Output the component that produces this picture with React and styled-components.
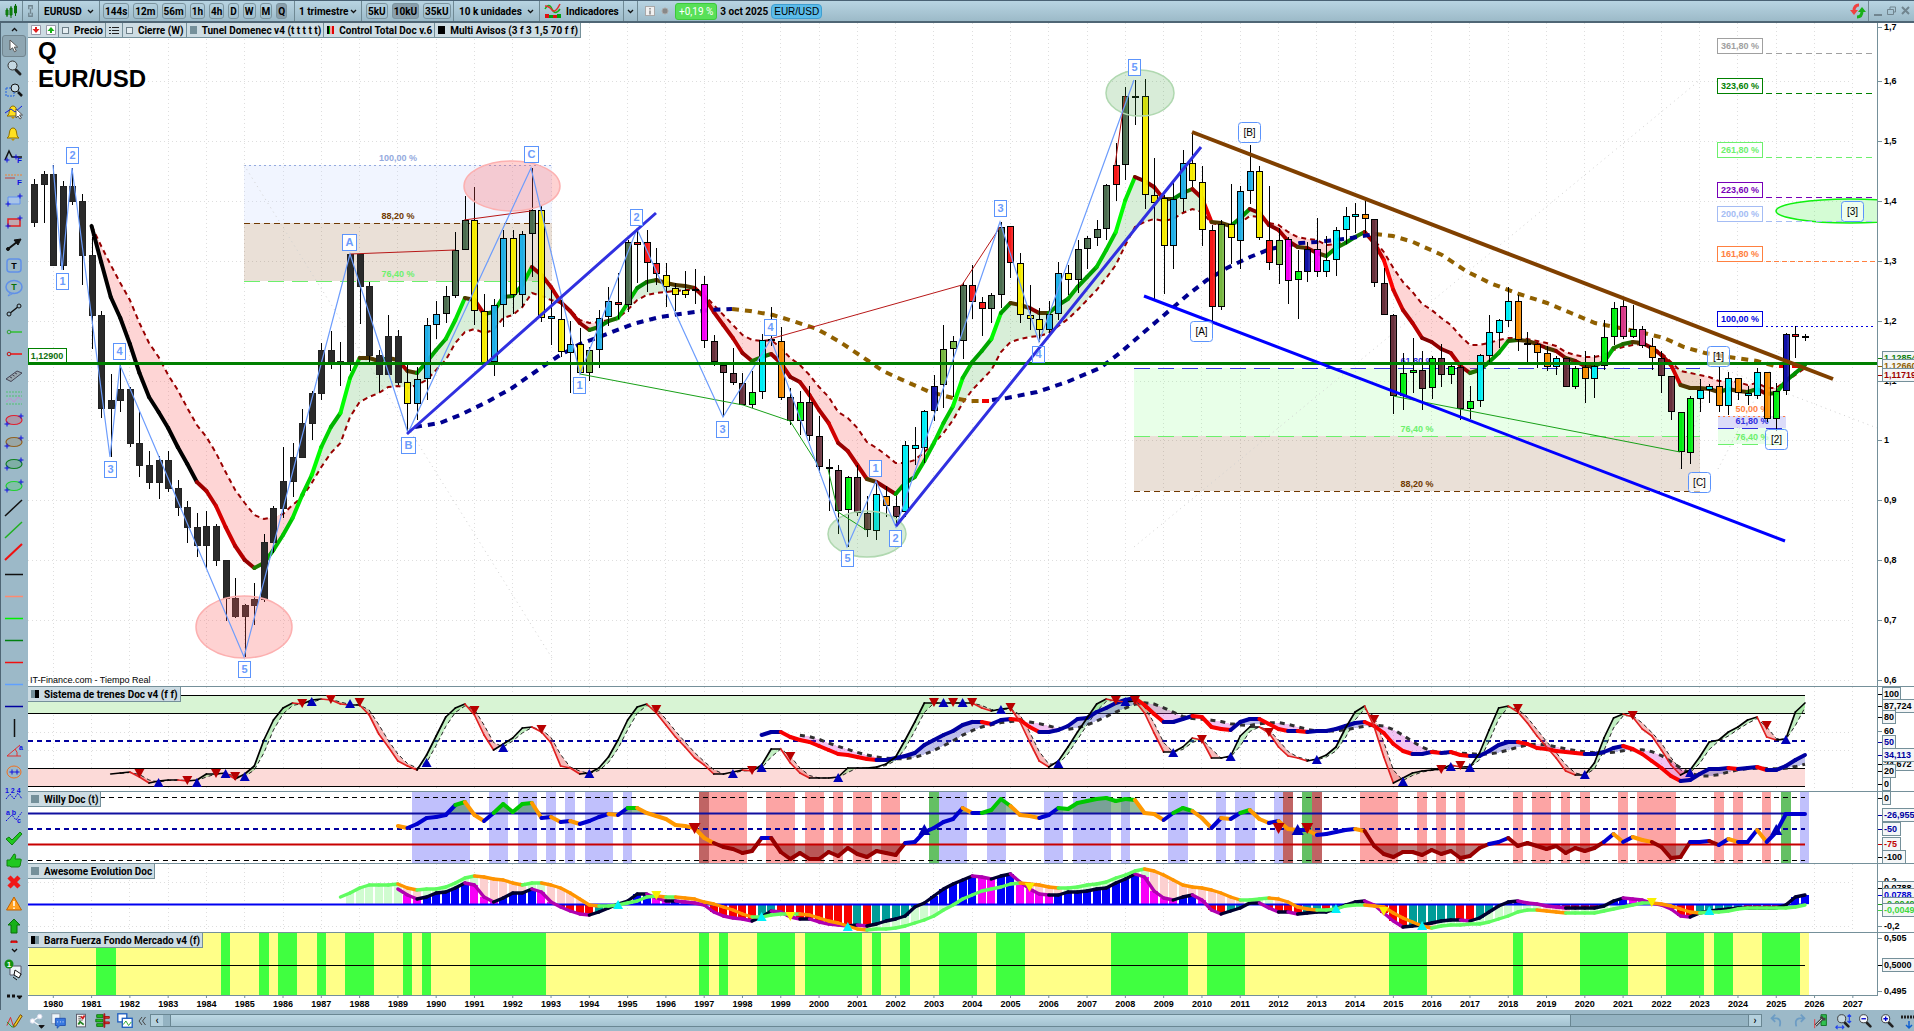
import React from 'react';
import styled, { createGlobalStyle, css } from 'styled-components';

const GlobalStyle = createGlobalStyle`
  *, *::before, *::after { box-sizing: border-box; }
  body {
    margin: 0;
    background: #fff;
    color: #000;
    font-family: 'Liberation Sans', Arial, sans-serif;
    font-size: 9px;
  }
`;

/* ---------- data ---------- */

const LEFT = 28;
const x = (q) => 53.3 + 9.572 * q;
const years = Array.from({ length: 48 }, (_, i) => 1980 + i);
const series = (start, text) => text.trim().split(/\s+/).map((v, i) => ({ q: start + i, y: Number(v) }));

const candleFill = {
  k: '#222', y: '#f8ee00', s: '#20b0e8', g: '#4c6e50', o: '#78b840', r: '#f81818', m: '#f800f8',
  b: '#68303c', l: '#00f010', c: '#00f0f8', a: '#f88c00', n: '#1010a8', p: '#d83888', d: '#000',
};

// high, open/close top, open/close bottom, low, colour - one entry per quarter
const candles = `
179,184,223,227,k 171,174,185,223,k 165,174,266,266,k 181,186,266,270,k 168,186,202,205,k 194,201,256,285,k
237,255,316,349,k 311,315,409,418,k 374,400,409,457,k 365,389,401,412,k 387,389,444,447,k 411,443,466,477,k
451,465,483,489,k 456,460,483,499,k 451,460,489,492,k 480,488,508,516,k 501,507,528,543,k 513,527,546,557,k
511,526,546,568,k 524,526,561,566,k 560,560,599,621,k 578,598,617,618,k 604,605,617,657,k 583,599,606,625,k
534,542,600,602,k 506,508,543,553,k 447,481,509,518,k 443,457,482,497,k 409,423,458,458,k 391,393,424,440,k
343,350,394,400,k 331,350,363,369,k 342,361,363,386,k 254,254,364,371,k 254,254,287,324,k 282,286,356,362,k
350,355,375,392,k 315,336,375,375,k 330,336,383,385,k 365,382,404,433,y 367,379,404,420,s 318,325,379,400,s
301,314,325,339,s 286,296,314,323,g 232,250,296,298,g 196,220,250,250,g 187,220,311,325,y 294,311,363,363,y
299,305,362,376,s 230,238,305,327,s 230,238,295,314,y 231,234,295,307,s 168,210,234,277,g 206,210,318,322,y
290,316,319,345,s 300,319,352,357,y 321,344,353,393,s 328,344,373,374,y 347,350,373,381,o 310,318,350,368,s
287,301,317,326,s 273,302,305,319,r 240,242,305,312,g 229,242,245,283,r 230,242,263,292,r 248,263,274,285,r
263,275,287,307,y 283,288,295,311,y 271,290,295,298,y 269,289,291,304,d 276,284,341,348,m 335,341,362,366,b
365,365,373,417,b 348,373,383,385,b 373,383,405,405,b 371,392,405,408,l 334,340,392,399,c 307,339,341,346,d
327,341,398,400,a 388,397,421,425,b 391,402,421,435,l 386,402,436,441,b 416,436,467,473,b 459,467,469,511,d
465,470,511,534,b 476,477,510,547,l 465,477,513,516,b 496,513,530,537,b 482,494,531,540,c 486,496,506,517,a
496,506,517,527,b 441,445,512,517,c 427,445,449,465,c 410,411,448,463,c 375,386,411,421,n 325,349,385,408,o
336,341,349,397,o 282,285,341,359,g 265,285,302,319,r 297,302,309,336,r 293,295,309,323,g 222,227,295,308,g
226,226,263,278,r 253,263,315,323,y 285,315,319,330,y 308,319,330,342,y 301,314,330,334,s 262,273,314,320,s
265,273,280,295,y 240,249,280,293,g 236,238,249,269,g 220,229,238,246,g 184,185,229,240,g 143,165,185,201,r
87,96,165,180,g 80,96,97,125,d 79,96,195,209,y 158,195,203,301,y 195,198,246,294,y 181,199,246,269,s
150,163,199,212,s 132,163,181,187,y 166,182,230,246,y 225,230,307,329,r 220,224,307,310,o 184,224,238,264,y
186,191,241,269,s 145,171,191,204,s 166,171,238,240,y 186,240,263,270,r 228,240,265,284,o 237,239,281,304,m
250,271,280,319,l 242,249,272,282,n 218,249,272,277,m 236,260,272,277,c 227,230,260,276,c 207,216,230,244,c
203,214,217,233,c 201,214,219,233,a 219,219,283,287,b 268,283,315,315,b 314,315,396,414,b 353,373,396,410,l
338,370,373,393,l 351,370,389,410,b 356,358,388,399,l 344,358,375,387,b 364,366,375,384,l 365,367,409,420,b
386,401,409,419,l 354,355,401,407,c 315,332,356,362,c 319,320,333,348,c 287,301,321,327,c 295,301,340,351,a
332,343,345,362,d 343,344,353,368,a 346,353,367,371,a 356,358,367,375,c 358,358,387,387,b 366,368,387,389,l
351,367,379,403,a 355,366,379,398,c 320,337,366,370,l 302,308,337,345,l 299,306,337,339,p 305,329,337,338,l
326,329,346,348,p 338,346,358,370,a 351,358,376,393,b 376,376,412,420,b 412,412,452,469,l 396,398,453,464,l
379,390,399,412,c 384,386,390,403,c 366,386,406,412,a 372,378,406,415,c 378,378,393,400,a 386,393,396,405,c
368,372,396,399,c 372,372,419,422,a 383,391,419,431,l 333,334,391,395,n 326,334,337,358,r 334,336,338,341,d
`.trim().split(/\s+/).map((row, i) => {
  const [high, top, bottom, low, color] = row.split(',');
  return { q: i - 2, high: +high, top: +top, bottom: +bottom, low: +low, color };
});

const tunnelFast = series(4, `226 262 297 318 344 373 397 412 428 447 464 482 491 506 527 546 560 568 563 550
535 518 495 475 447 427 413 378 358 358 361 358 360 371 373 362 350 339 320 298 300 314 312 297 296 285 267 275
287 302 311 323 330 327 321 318 303 288 282 280 283 285 286 288 297 312 325 338 353 361 357 354 363 377 382 395
410 423 443 451 465 479 482 488 494 483 477 461 443 423 406 378 362 351 339 313 303 305 308 313 313 305 299 287
277 267 250 232 200 177 181 187 199 199 193 189 198 222 223 226 218 209 213 225 230 241 247 248 253 256 248 243
237 232 243 260 290 310 323 338 342 349 353 366 373 370 362 353 341 340 341 344 348 351 358 361 366 366 362 348
344 342 343 348 355 365 385 388 388 389 392 389 391 392 389 394 393 381 373 365`);

const tunnelSlow = series(4, `226 246 265 283 300 323 343 357 375 390 408 425 437 453 472 490 503 515 519 517
514 505 497 483 467 453 443 417 402 397 393 387 386 388 385 380 370 360 343 332 329 333 330 318 315 307 293 296
300 303 310 320 323 322 320 318 310 300 295 293 292 291 290 290 295 305 315 325 335 340 341 340 348 358 365 375
387 397 412 418 428 442 448 455 463 463 460 452 443 433 420 403 390 380 370 352 342 339 337 336 333 326 319 310
300 290 278 265 245 227 222 219 221 219 213 209 212 223 225 227 223 216 217 223 225 232 237 239 240 245 244 242
237 233 240 252 268 282 292 304 310 318 325 336 345 345 343 340 338 338 339 341 343 346 352 355 357 357 355 350
347 345 344 347 353 362 371 373 375 377 381 381 382 385 383 388 388 381 375 368`);

const longAverage = [
  { color: '#000090', points: '415,427 440,423 460,415 487,402 512,388 535,372 557,357 580,344 607,334 633,324 660,317 687,313 710,310 732,309' },
  { color: '#906000', points: '732,309 750,311 773,315 793,321 817,329 840,342 867,360 883,371 907,382 930,392 953,398 970,401 982,401' },
  { color: '#f00000', points: '982,401 992,401' },
  { color: '#000090', points: '992,400 1007,398 1037,392 1067,382 1100,368 1120,353 1143,333 1170,310 1190,293 1207,280 1227,268 1250,257 1270,249 1300,243 1316,242 1345,239 1375,234' },
  { color: '#906000', points: '1375,234 1393,236 1413,242 1442,255 1466,271 1490,283 1519,294 1547,303 1571,313 1595,323 1620,328 1644,333 1664,338 1684,347 1705,353 1729,357 1757,361 1775,366' },
  { color: '#f00000', points: '1779,366 1802,366' },
];

const wavePath = '53,165 62,270 72,168 110,457 120,365 244,657 350,254 408,433 531,168 580,374 637,229 723,417 771,339 847,547 876,481 896,527 1000,222 1039,342 1134,80';
const waveLabels = [
  ['2', 72, 155], ['1', 62, 281], ['4', 119, 351], ['3', 110, 469], ['5', 244, 669], ['A', 349, 242], ['B', 408, 445],
  ['C', 531, 154], ['2', 636, 217], ['1', 579, 385], ['3', 722, 429], ['4', 770, 327], ['5', 847, 558], ['1', 875, 468],
  ['2', 895, 538], ['3', 1000, 208], ['4', 1038, 354], ['5', 1134, 67],
];
const bigWaveLabels = [
  ['[A]', 1201, 331], ['[B]', 1249, 132], ['[C]', 1699, 482], ['[1]', 1718, 356], ['[2]', 1776, 439], ['[3]', 1852, 211],
];
const extensions = [
  ['361,80 %', 38, '#a0a0a0', '6 4'], ['323,60 %', 78, '#008000', '6 4'], ['261,80 %', 142, '#6cf06c', '6 4'],
  ['223,60 %', 182, '#7800b8', '6 4'], ['200,00 %', 206, '#a4bcf4', '6 4'], ['161,80 %', 246, '#ff8040', '5 3'],
  ['100,00 %', 311, '#0000e0', '2 3'],
];

const oscillator = series(6, `774 773 772 777 783 781 780 780 781 780 774 774 773 779 774 766 740 720 708 703 704 700
699 700 704 705 705 715 734 747 761 766 770 755 736 717 708 704 715 735 750 744 738 728 727 732 743 766 768 774 773
768 757 740 720 707 704 713 725 737 747 758 765 774 774 772 770 771 765 749 749 763 773 778 778 778 777 768 768 768
767 764 757 740 722 703 703 703 703 703 703 708 711 709 708 722 742 761 767 761 747 732 718 704 699 701 702 701 713
733 752 752 747 738 740 758 758 756 736 727 727 733 747 756 758 761 759 755 747 728 712 706 727 757 783 778 773 771
770 769 765 767 767 753 730 708 706 712 723 736 747 758 771 775 775 763 738 718 714 717 729 736 750 765 775 770 757
742 740 732 727 720 717 737 740 739 712 703`);
const trainTrend = series(74, `735 732 732 737 740 742 746 750 754 755 757 759 760 760 758 756 753 745 740 735 731
725 722 722 724 720 719 720 727 732 732 730 726 719 718 712 708 703 700 698 705 714 722 722 719 716 717 727 729 730
722 719 719 724 729 731 731 732 731 731 729 726 723 722 726 733 744 751 754 754 752 753 752 755 756 756 751 745 742
742 744 748 749 751 752 753 754 754 752 748 746 749 754 761 768 776 781 780 774 769 769 768 769 768 767 770 770 766
760 755`);
const trainSells = [[9, 774], [14, 781], [17, 774], [19, 777], [26, 704], [29, 700], [32, 703], [44, 711], [51, 730],
  [63, 710], [73, 771], [77, 757], [92, 703], [94, 703], [96, 703], [100, 708], [111, 701], [113, 701], [120, 740],
  [127, 733], [138, 720], [145, 770], [147, 766], [153, 709], [165, 716], [179, 726]];
const trainBuys = [[11, 783], [15, 783], [18, 774], [20, 777], [27, 702], [31, 704], [39, 763], [47, 748], [56, 774],
  [71, 774], [74, 768], [82, 778], [93, 703], [95, 703], [99, 710], [105, 764], [112, 702], [117, 753], [123, 757],
  [132, 760], [141, 782], [146, 767], [148, 768], [160, 775], [171, 773], [181, 740]];

const willy = series(36, `826 828 824 818 817 815 805 802 815 821 813 804 812 804 803 818 817 822 821 824 821 817 814
815 808 808 813 816 819 825 826 828 838 843 847 849 853 851 838 838 852 859 853 859 859 852 856 848 854 857 851 853
855 843 842 832 828 822 819 808 813 813 810 799 806 815 816 818 815 808 809 803 801 799 798 801 799 800 813 814 820
813 808 811 818 828 818 819 813 810 819 823 821 829 830 830 835 834 832 830 829 831 846 854 857 852 852 855 850 854
851 858 856 848 844 842 838 846 843 846 849 846 853 848 851 848 842 834 842 837 840 842 847 858 857 842 842 841 845
839 842 842 830 842 832 814 814 814`);
const willyBands = [
  ['#c0c0fc', '37.5-43.5 45.5-47.5 48.5-50.5 51.5-52.5 53.5-54.5 55.5-58.5 59.5-60.5 92.5-95.5 97.5-99.5 103.5-105.5 106.5-110.5 111.5-112.5 116.5-118.5 121.5-122.5 123.5-125.5 127.5-128.5 182.5-183.4'],
  ['#fca4a4', '68.5-72.5 74.5-77.5 78.5-80.5 81.5-82.5 83.5-85.5 86.5-88.5 136.5-140.5 142.5-143.5 144.5-145.5 146.5-147.5 152.5-153.5 154.5-156.5 157.5-158.5 159.5-160.5 163.5-164.5 165.5-169.5 173.5-174.5 175.5-176.5 178.5-179.5'],
  ['#c06464', '67.5-68.5 128.5-129.5 131.5-132.5'],
  ['#64c064', '91.5-92.5 130.5-131.5 180.5-181.5'],
];

const awesomeFast = series(36, `889 895 899 897 893 892 888 883 885 897 902 898 893 893 889 892 902 907 911 914 915
912 908 904 901 894 894 898 901 901 902 903 905 912 916 918 919 921 917 911 912 917 919 919 922 924 925 926 925 926
924 921 919 916 907 903 896 889 884 880 876 877 879 876 874 882 889 894 895 895 892 892 891 889 888 883 879 874 877
891 898 900 897 895 900 910 914 911 908 903 903 908 912 912 914 913 912 912 909 905 902 901 905 913 921 927 926 925
923 921 920 920 921 918 912 906 902 901 903 904 906 907 908 908 908 908 906 901 898 899 900 903 905 909 916 917 913
911 910 909 908 908 908 908 908 905 897 895`);
const awesomeSlow = series(30, `897 893 888 885 885 885 884 888 890 889 889 887 883 878 876 877 879 880 883 885 883
883 885 888 893 899 905 906 906 905 903 901 897 896 897 897 898 899 902 904 907 910 914 917 917 915 914 914 914 915
918 921 923 926 929 930 929 929 928 926 923 920 916 910 905 899 895 891 889 887 884 883 884 885 887 888 888 887 885
884 882 878 875 871 869 871 875 880 885 887 888 890 893 897 900 900 899 898 899 902 907 909 910 910 909 906 905 905
906 907 913 918 922 926 928 926 925 925 924 924 922 919 916 912 910 910 911 912 913 913 913 913 911 909 907 905 903
903 904 906 909 912 913 912 912 911 909 908 908 908 908 908 907 905`);

const forceBands = [['#40ff40', '4.5-6.5 17.5-18.5 21.5-22.5 23.5-25.5 27.5-28.5 30.5-33.5 36.5-37.5 38.5-39.5 43.5-51.5 67.5-68.5 69.5-70.5 73.5-77.5 78.5-84.5 85.5-86.5 88.5-89.5 92.5-96.5 98.5-101.5 110.5-118.5 120.5-124.5 139.5-143.5 152.5-153.5 159.5-164.5 168.5-172.5 173.5-175.5 178.5-182.5']];

/* ---------- layout ---------- */

const Shell = styled.div`
  display: flex;
  flex-direction: column;
  height: 100vh;
  overflow: hidden;
  background: #9cb9c6;
`;

const TopBar = styled.header`
  display: flex;
  align-items: stretch;
  height: 23px;
  flex: none;
  border-top: 1px solid #4a6274;
  border-bottom: 2px solid #4f6675;
  background: linear-gradient(#b8d4e2, #9cbac8);
  font: bold 10px Roboto, sans-serif;
`;

const Group = styled.div`
  display: flex;
  align-items: center;
  gap: ${(props) => props.$gap || 4}px;
  padding: 0 ${(props) => (props.$pad === undefined ? 4 : props.$pad)}px;
  width: ${(props) => (props.$w ? `${props.$w}px` : 'auto')};
  border-right: ${(props) => (props.$open ? 'none' : '1px solid #6f8994')};
  white-space: nowrap;
`;

const Spacer = styled.div`
  flex: 1;
`;

const plainButton = css`
  display: flex;
  align-items: center;
  justify-content: center;
  padding: 0;
  border: 0;
  background: none;
  color: inherit;
  font: inherit;
`;

const BarButton = styled.button`
  ${plainButton}
  gap: 5px;
`;

const ScaleButton = styled.button`
  ${plainButton}
  height: 16px;
  padding: 0 1px;
  border: 1px solid #7b949f;
  border-radius: 3px;
  background: ${(props) => (props.$on ? '#8a9fac' : 'transparent')};
`;

const Picker = styled.button`
  ${plainButton}
  flex: 1;
  justify-content: space-between;
`;

const Change = styled.span`
  padding: 2px 3px;
  border: 1px solid #3cc83c;
  border-radius: 3px;
  background: #58e058;
  color: #fff;
  font: 10px Roboto, sans-serif;
`;

const Pair = styled.span`
  padding: 1px 2px;
  border: 1px solid #3f9ed0;
  border-radius: 4px;
  background: #5cbcea;
  font: 10px 'Liberation Sans', sans-serif;
`;

const Body = styled.div`
  display: flex;
  flex: 1;
  min-height: 0;
`;

const Rail = styled.nav`
  display: flex;
  flex-direction: column;
  width: 28px;
  flex: none;
  padding: 0 2px 0 1px;
  border-left: 1px solid #4f6675;
  background: #9cb9c8;
`;

const RailTools = styled.div`
  display: flex;
  flex-direction: column;
  flex: 1;
  min-height: 0;
  overflow: hidden;
`;

const RailButton = styled.button`
  ${plainButton}
  height: ${(props) => props.$h || 22}px;
  flex: none;
  border: 1px solid ${(props) => (props.$on ? '#71858f' : 'transparent')};
  border-radius: 3px;
  background: ${(props) => (props.$on ? '#8ea6b2' : 'none')};
`;

const Charts = styled.main`
  display: flex;
  flex-direction: column;
  flex: 1;
  min-width: 0;
  background: #fff;
`;

const Panel = styled.section`
  position: relative;
  display: grid;
  grid-template-columns: minmax(0, 1fr) 37px;
  height: ${(props) => (props.$h ? `${props.$h}px` : 'auto')};
  flex: ${(props) => (props.$h ? 'none' : 1)};
  min-height: 0;
  border-top: ${(props) => (props.$h ? '1px solid #75909a' : 'none')};
`;

const Plot = styled.svg`
  display: block;
  width: 100%;
  height: 100%;
  overflow: hidden;
`;

const Axis = styled.svg`
  display: block;
  width: 37px;
  height: 100%;
  border-left: 1px solid #75909a;
  overflow: hidden;
`;

const Tabs = styled.div`
  position: absolute;
  top: 0;
  left: 0;
  display: flex;
  height: 15px;
  border: 1px solid #75909a;
  border-top: 0;
  border-left: 0;
  background: #cddce3;
  font: bold 10px Roboto, sans-serif;
`;

const Tab = styled.div`
  display: flex;
  align-items: center;
  gap: 5px;
  padding: 0 2px 0 3px;
  white-space: nowrap;
  & + & { border-left: 1px solid #75909a; }
`;

const Check = styled.input`
  appearance: none;
  width: 7px;
  height: 7px;
  margin: 0;
  border: 1px solid #6d7f88;
  background: #e4edf1;
`;

const Swatch = styled.i`
  width: 7px;
  height: 8px;
  background: ${(props) => props.$fill};
`;

const Title = styled.h1`
  position: absolute;
  top: 14px;
  left: 10px;
  margin: 0;
  font: bold 24px/28px 'Liberation Sans', Arial, sans-serif;
`;

const Source = styled.p`
  position: absolute;
  bottom: 1px;
  left: 2px;
  margin: 0;
  font-size: 9px;
  line-height: 10px;
`;

const TimeAxis = styled(Plot)`
  height: 15px;
  flex: none;
`;

const Caption = styled.text`
  font: bold ${(props) => props.$size || 9}px 'Liberation Sans', Arial, sans-serif;
  fill: ${(props) => props.$fill || '#000'};
  text-anchor: ${(props) => props.$anchor || 'middle'};
`;

const WaveText = styled(Caption)`
  font-weight: ${(props) => (props.$plain ? 'normal' : 'bold')};
`;

const BottomBar = styled.footer`
  display: flex;
  align-items: center;
  gap: 4px;
  height: 21px;
  flex: none;
  padding: 0 0 0 6px;
  overflow: hidden;
  background: #9cb9c8;
`;

const FootButton = styled.button`
  ${plainButton}
  width: 18px;
  height: 18px;
  flex: none;
`;

const CutButton = styled(FootButton)`
  width: 14px;
  justify-content: flex-start;
  overflow: hidden;
`;

const ScrollTrack = styled.div`
  display: flex;
  flex: 1;
  height: 13px;
  margin: 0 2px 0 0;
  border: 1px solid #6a8793;
  background: #94b3c2;
`;

const ScrollStep = styled.button`
  ${plainButton}
  width: 12px;
  background: #b4d0dd;
  font: bold 10px Roboto, sans-serif;
`;

const ScrollThumb = styled.div`
  width: 87%;
  margin-left: 7px;
  border: 1px solid #6a8793;
  border-width: 0 1px;
  background: linear-gradient(#bcd8e4, #a4c2d0);
`;

const ScrollFree = styled.div`
  flex: 1;
  border-right: 1px solid #6a8793;
`;

/* ---------- chart pieces ---------- */

const Stage = ({ top, children }) => <g transform={`translate(${-LEFT} ${-top})`}>{children}</g>;

const Grid = ({ rows, top, bottom }) => (
  <g stroke="#dedede" strokeDasharray="1 3" shapeRendering="crispEdges">
    {years.map((year, i) => <line key={year} x1={x(i * 4)} x2={x(i * 4)} y1={top} y2={bottom} />)}
    {rows.map((y) => <line key={y} x1={LEFT} x2="100%" y1={y} y2={y} />)}
  </g>
);

const Segments = ({ data, color, width }) => (
  <g strokeWidth={width} strokeLinecap="round">
    {data.slice(1).map((p, i) => (
      <line key={p.q} x1={x(p.q - 1)} y1={data[i].y} x2={x(p.q)} y2={p.y} stroke={color(data[i].y, p.y, p.q)} />
    ))}
  </g>
);

const Between = ({ a, b, up, down }) => (
  <g shapeRendering="crispEdges">
    {a.slice(1).map((p, i) => {
      const p0 = a[i];
      const points = `${x(p0.q)},${p0.y} ${x(p.q)},${p.y} ${x(p.q)},${b[i + 1].y} ${x(p0.q)},${b[i].y}`;
      return <polygon key={p.q} points={points} fill={p.y + p0.y < b[i].y + b[i + 1].y ? up : down} />;
    })}
  </g>
);

const toPoints = (data) => data.map((p) => `${x(p.q)},${p.y}`).join(' ');

const average = (data, length) => data.slice(length - 1).map((p, i) => ({
  q: p.q,
  y: data.slice(i, i + length).reduce((sum, d) => sum + d.y, 0) / length,
}));

const Marker = ({ q, y, up, fill, size = 5 }) => (
  <path fill={fill} d={up ? `M${x(q)} ${y - size}l${size} ${size * 2 - 1}h${-2 * size}z` : `M${x(q)} ${y + size - 1}l${size} ${1 - size * 2}h${-2 * size}z`} />
);

const Bands = ({ bands, top, height }) => (
  <g shapeRendering="crispEdges">
    {bands.map(([fill, text]) => text.split(' ').map((band) => {
      const [from, to] = band.split('-').map(Number);
      return <rect key={band} x={x(from)} width={x(to) - x(from)} y={top} height={height} fill={fill} />;
    }))}
  </g>
);

const tunnelColor = (from, to, q) => {
  const d = Math.abs(to - from);
  if (q < 16) return '#000';
  if (to < from) return `rgb(${d < 6 ? 30 : 0}, ${Math.min(255, 95 + d * 6)}, 0)`;
  return d < 4 ? '#503800' : `rgb(${Math.min(255, 110 + d * 5)}, 0, 0)`;
};

const Fib = ({ left, right, labelX, levels }) => levels.map(([label, y, color, dash, fill, fillTo]) => (
  <g key={label}>
    {fill && <rect x={left} width={right - left} y={y} height={fillTo - y} fill={fill} />}
    <line x1={left} x2={right} y1={y} y2={y} stroke={color} strokeDasharray={dash} shapeRendering="crispEdges" />
    <Caption x={labelX} y={y - 4} $fill={color}>{label}</Caption>
  </g>
));

const AxisLabels = ({ top, labels }) => (
  <g transform={`translate(0 ${-top})`}>
    {labels.map(([label, y, color, boxed]) => (
      <g key={`${label}${y}`}>
        <line x1="0" x2="4" y1={y} y2={y} stroke={boxed ? color || '#000' : '#75909a'} shapeRendering="crispEdges" />
        {boxed && <rect x="4.5" y={y - 6.5} width={label.length * 5 + 3} height="13" fill="#f4f6f7" stroke="#75909a" />}
        <Caption x="6" y={y + 3} $anchor="start" $fill={color}>{label}</Caption>
      </g>
    ))}
  </g>
);

const PricePlot = () => (
  <Plot role="img" aria-label="EUR/USD">
    <defs>
      {Object.entries(candleFill).map(([key, color]) => (
        <linearGradient key={key} id={`candle-${key}`}>
          <stop offset="0" stopColor={color} />
          <stop offset="0.4" stopColor={color} />
          <stop offset="1" stopColor={color} stopOpacity="0.85" />
        </linearGradient>
      ))}
    </defs>
    <Stage top={23}>
      <Grid rows={[81, 141, 201, 261, 321, 381, 440, 500, 560, 620, 680]} top={23} bottom={686} />
      <Fib
        left={244}
        right={552}
        labelX={398}
        levels={[
          ['100,00 %', 165, '#94aade', '2 3', 'rgba(200, 215, 255, 0.25)', 223],
          ['88,20 %', 223, '#703800', '6 4', 'rgba(140, 85, 35, 0.18)', 281],
          ['76,40 %', 281, '#6cf06c', '16 8'],
        ]}
      />
      <Fib
        left={1134}
        right={1700}
        labelX={1417}
        levels={[
          ['61,80 %', 368, '#3030e0', '16 8', 'rgba(100, 255, 100, 0.15)', 436],
          ['76,40 %', 436, '#6cf06c', '16 8', 'rgba(140, 85, 35, 0.18)', 491],
          ['88,20 %', 491, '#703800', '6 4'],
        ]}
      />
      <Fib
        left={1718}
        right={1786}
        labelX={1752}
        levels={[
          ['50,00 %', 416, '#ff8040', '2 3', 'rgba(60, 60, 220, 0.18)', 428],
          ['61,80 %', 428, '#3030e0', '16 8', 'rgba(100, 255, 100, 0.15)', 444],
          ['76,40 %', 444, '#6cf06c', '16 8'],
        ]}
      />
      <g stroke="#d0d0d0" strokeDasharray="1 4">
        <path fill="none" d="M244 165L552 658M1134 547L1700 80M1718 367L1877 428M1680 469L1710 380M1718 469L1786 340" />
      </g>

      <Between a={tunnelFast} b={tunnelSlow} up="rgba(60, 170, 60, 0.2)" down="rgba(250, 100, 100, 0.27)" />
      <polyline points={toPoints(tunnelSlow)} fill="none" stroke="#980000" strokeWidth="2" strokeDasharray="5 4" />
      <Segments data={tunnelFast} color={tunnelColor} width={4} />
      {longAverage.map((part) => (
        <polyline key={part.points} points={part.points} fill="none" stroke={part.color} strokeWidth="4" strokeDasharray="7 6" />
      ))}

      <g shapeRendering="crispEdges">
        {candles.map((c) => {
          const cx = Math.round(x(c.q));
          return (
            <g key={c.q} stroke="#000">
              <line x1={cx + 0.5} x2={cx + 0.5} y1={c.high} y2={c.low} />
              <rect
                x={cx - 2.5}
                y={c.top + 0.5}
                width="6"
                height={Math.max(c.bottom - c.top - 1, 1)}
                fill={c.color === 'k' ? '#2a2a2a' : `url(#candle-${c.color})`}
                stroke={c.color === 'k' ? '#222' : '#000'}
              />
            </g>
          );
        })}
      </g>

      <g strokeWidth="1.5">
        <ellipse cx="244" cy="627" rx="48" ry="31" fill="rgba(250, 90, 90, 0.27)" stroke="#fcb0b0" />
        <ellipse cx="512" cy="186" rx="48" ry="25" fill="rgba(250, 90, 90, 0.27)" stroke="#fcb0b0" />
        <ellipse cx="867" cy="534" rx="39" ry="23" fill="rgba(60, 160, 60, 0.2)" stroke="#b0d8b0" />
        <ellipse cx="1140" cy="93" rx="34" ry="23" fill="rgba(60, 160, 60, 0.2)" stroke="#b0d8b0" />
        <ellipse cx="1850" cy="211" rx="74" ry="12" fill="rgba(60, 240, 60, 0.22)" stroke="#10f010" />
      </g>
      <path fill="none" stroke="#b81818" d="M350 254L455 250M464 220L531 211M770 339L962 285L1000 227M1115 165L1125 96" />
      <path fill="none" stroke="#18a018" d="M580 374L743 405L790 421L818 465M828 469L838 512L866 530M1393 396L1680 452" />
      <polyline points={wavePath} fill="none" stroke="#6c9cfc" strokeWidth="1.2" />
      <g fill="none">
        <path stroke="#008000" strokeWidth="3" d="M28 363.5H1877" />
        <path stroke="#3030e0" strokeWidth="3" d="M407 434L656 213M896 526L1201 147" />
        <path stroke="#0000ff" strokeWidth="3" d="M1144 296L1785 541" />
        <path stroke="#804000" strokeWidth="4" d="M1192 132L1833 379" />
      </g>

      {extensions.map(([label, y, color, dash]) => (
        <g key={label}>
          <line x1="1766" x2="1876" y1={y + 15.5} y2={y + 15.5} stroke={color} strokeDasharray={dash} />
          <rect x="1717.5" y={y + 0.5} width="45" height="15" fill="#fff" stroke={color} />
          <Caption x="1740" y={y + 11} $fill={color}>{label}</Caption>
        </g>
      ))}
      <rect x="28.5" y="348.5" width="38" height="14" fill="#fff" stroke="#008000" />
      <Caption x="47" y="359" $fill="#107010">1,12900</Caption>

      {waveLabels.map(([label, cx, cy]) => {
        const w = label > '9' ? 14 : 12;
        return (
          <g key={`${cx}${cy}`}>
            <rect x={cx - w / 2 + 0.5} y={cy - 7.5} width={w} height="16" fill={cx === 1038 ? 'none' : '#fff'} stroke="#5c94fc" />
            <WaveText x={cx + 0.5} y={cy + 4} $size={11} $fill="#6c9cfc">{label}</WaveText>
          </g>
        );
      })}
      {bigWaveLabels.map(([label, cx, cy]) => (
        <g key={label}>
          <rect x={cx - 10.5} y={cy - 9.5} width="22" height="20" rx="3" fill="rgba(255, 255, 255, 0.6)" stroke="#5c94fc" />
          <WaveText $plain x={cx + 0.5} y={cy + 4} $size={10}>{label}</WaveText>
        </g>
      ))}
    </Stage>
  </Plot>
);

const trainSignal = average(oscillator, 2);
const trendSignal = average(trainTrend, 5);
const riseFall = (rise, fall) => (from, to) => (to <= from ? rise : fall);

const TrainsPlot = () => (
  <Plot role="img" aria-label="Sistema de trenes">
    <Stage top={687}>
      <Grid rows={[732, 750]} top={687} bottom={791} />
      <rect x="28" width="1777" y="695" height="18" fill="#d8f4d4" />
      <rect x="28" width="1777" y="768" height="18" fill="#fcdad8" />
      <path stroke="#000" shapeRendering="crispEdges" d="M28 695H1805M28 713H1805M28 768H1805M28 786H1805" />
      <path stroke="#0000a0" strokeWidth="2" strokeDasharray="5 4" d="M28 741H1805" />
      <Between a={oscillator.slice(1)} b={trainSignal} up="rgba(80, 210, 80, 0.35)" down="rgba(230, 60, 60, 0.35)" />
      <polyline points={toPoints(trainSignal)} fill="none" stroke="#222" strokeDasharray="4 3" />
      <Between a={trainTrend.slice(4)} b={trendSignal} up="rgba(60, 60, 190, 0.33)" down="rgba(210, 40, 210, 0.28)" />
      <polyline points={toPoints(trendSignal)} fill="none" stroke="#303030" strokeWidth="3" strokeDasharray="5 5" />
      <Segments data={trainTrend} color={riseFall('#0000a0', '#f80000')} width={4} />
      <Segments data={oscillator} color={riseFall('#000', '#e02020')} width={1.7} />
      {trainSells.map(([q, y]) => <Marker key={q} q={q} y={y} fill="#b80000" />)}
      {trainBuys.map(([q, y]) => <Marker key={q} q={q} y={y} up fill="#0000b8" />)}
    </Stage>
  </Plot>
);

const willyColor = (from, to) => {
  if (to > 844 || from > 845) return '#980000';
  if (to < 813 && from < 815) return '#00c800';
  return to > from ? '#ff9800' : '#0000d0';
};

const WillyPlot = () => (
  <Plot role="img" aria-label="Willy Doc">
    <Stage top={792}>
      <Bands bands={willyBands} top={792} height={71} />
      <path stroke="#000" strokeDasharray="5 4" shapeRendering="crispEdges" d="M28 797H1805M28 860H1805" />
      <path stroke="#0000a0" strokeWidth="2" strokeDasharray="5 4" d="M28 829H1805" />
      <Between a={willy.map((p) => ({ q: p.q, y: Math.min(p.y, 813) }))} b={willy.map(() => ({ y: 813 }))} up="rgba(50, 130, 50, 0.5)" down="none" />
      <Between a={willy.map((p) => ({ q: p.q, y: Math.max(p.y, 844) }))} b={willy.map(() => ({ y: 844 }))} up="none" down="rgba(120, 10, 10, 0.5)" />
      <path stroke="#1010a0" strokeWidth="2" d="M28 813.5H1805" />
      <path stroke="#c80000" strokeWidth="2" d="M28 844.5H1805" />
      <Segments data={willy} color={willyColor} width={4} />
      {[67, 128, 131].map((q) => <Marker key={q} q={q} y={829} size={6} fill="#b80000" />)}
      {[91, 130, 180].map((q) => <Marker key={q} q={q} y={830} size={6} up fill="#0000b8" />)}
    </Stage>
  </Plot>
);

const barColor = (from, to) => {
  if (to < 904) return to <= from ? '#0000f8' : '#f800f8';
  return to < from ? '#009c98' : '#f80000';
};

const AwesomeBars = ({ data, color }) => (
  <g shapeRendering="crispEdges">
    {data.slice(1).map((p, i) => (
      <rect
        key={p.q}
        x={Math.round(x(p.q)) - 4}
        width="8"
        y={Math.min(p.y, 904)}
        height={Math.abs(p.y - 904)}
        fill={color(data[i].y, p.y)}
      />
    ))}
  </g>
);

const AwesomePlot = () => (
  <Plot role="img" aria-label="Awesome Evolution Doc">
    <Stage top={864}>
      <Grid rows={[882, 926]} top={864} bottom={932} />
      <AwesomeBars data={awesomeSlow} color={riseFall('#d0fcd0', '#fcd0d0')} />
      <AwesomeBars data={awesomeFast} color={barColor} />
      <path stroke="#0000f0" strokeWidth="2" d="M28 904.5H1805" />
      <Segments data={awesomeFast} color={riseFall('#000030', '#b000b0')} width={3.4} />
      <Segments data={awesomeSlow} color={riseFall('#60fc60', '#ff9400')} width={3.4} />
      {[[63, 896], [77, 917], [102, 888], [139, 912], [167, 903]].map(([q, y]) => <Marker key={q} q={q} y={y} fill="#f8f000" />)}
      {[[59, 905], [74, 917], [83, 927], [134, 909], [143, 926], [173, 911]].map(([q, y]) => <Marker key={q} q={q} y={y} up fill="#00f0f8" />)}
    </Stage>
  </Plot>
);

const ForcePlot = () => (
  <Plot role="img" aria-label="Barra Fuerza">
    <Stage top={933}>
      <rect x="29" width="1780" y="933" height="62" fill="#ffff88" />
      <Bands bands={forceBands} top={933} height={62} />
      <path stroke="#000" shapeRendering="crispEdges" d="M28 965H1805" />
    </Stage>
  </Plot>
);

/* ---------- icons ---------- */

const Icon = ({ w = 20, h = 18, children }) => (
  <svg width={w} height={h} viewBox={`0 0 ${w} ${h}`} fill="none" stroke="#111" aria-hidden="true">{children}</svg>
);

const Caret = ({ up }) => (
  <Icon w={7} h={5}><path strokeWidth="1.3" d={up ? 'M1 4L3.5 1.5L6 4' : 'M1 1L3.5 3.5L6 1'} /></Icon>
);

const Lens = ({ sign, arrows }) => (
  <Icon>
    <path stroke="#222" strokeWidth="3" strokeLinecap="round" d="M12 11l4 4" />
    <circle cx="8.500" cy="6.500" r="4.500" fill={sign ? '#f4f8fc' : '#c4d8e2'} stroke="#333" />
    {sign && <path stroke="#0000d0" strokeWidth="1.500" d={sign === '+' ? 'M6 6.500h5M8.500 4v5' : 'M6 6.500h5'} />}
    {arrows && <path stroke="#2040f0" strokeWidth="1.200" d="M17 2v9M15 4l2-2l2 2M15 9l2 2l2-2M2 16h9M4 14l-2 2l2 2M9 14l2 2l-2 2" />}
  </Icon>
);

const Handles = ({ at }) => (
  <path stroke="#1010e0" strokeWidth="1" d={at.map(([cx, cy]) => `M${cx - 2.5} ${cy}h5M${cx} ${cy - 2.5}v5`).join('')} />
);

const LineIcon = ({ d, color, width = 1.5 }) => <Icon><path d={d} stroke={color} strokeWidth={width} /></Icon>;
const EllipseIcon = ({ color }) => (
  <Icon>
    <ellipse cx="10" cy="9" rx="8" ry="4.500" stroke={color} strokeWidth="1.200" fill={color} fillOpacity="0.200" />
    <Handles at={[[3, 13], [17, 5]]} />
  </Icon>
);
const Bell = ({ extra }) => (
  <Icon>
    <path fill="#ffe020" stroke="#907000" d="M3 13c2-1 2-3 2.500-6C6 4 7.500 3 9 3s3 1 3.500 4c.5 3 .5 5 2.500 6z" />
    <path fill="#c09000" stroke="none" d="M7 14h4l-2 2z" />
    {extra && <path stroke="#1020e0" d="M1 10l6-4l4 3l7-6" />}
    {extra && <path fill="#fff" stroke="#555" d="M12 6v9l2-2l2 3l1.500-1l-2-3h3z" />}
  </Icon>
);

const tools = [
  ['Cursor', <Icon><path fill="#fff" stroke="#555" d="M6 3v10l2.500-2.200l2 4l1.800-.9l-2-3.800h3.400z" /></Icon>],
  ['Zoom', <Lens />],
  ['Zoom de zona', <Icon><path stroke="#2060e0" strokeDasharray="2 1" d="M2 7h8v8H2z" /><path strokeWidth="2.500" d="M14 11l4 4" /><circle cx="11" cy="7" r="4" fill="#c4d8e2" /></Icon>],
  ['Alerta en objeto', <Bell extra />],
  ['Alerta', <Bell />],
  ['Patrones', <Icon><path d="M1 13l4-9l3 6h10" strokeWidth="1.500" /><Handles at={[[3, 13], [12, 10]]} /><text x="13" y="16" fontSize="8" fontWeight="bold" fill="#1010e0" stroke="none">F</text></Icon>],
  ['Niveles', <Icon><path stroke="#f08030" strokeDasharray="2 1" d="M1 6h17" /><path stroke="#c04040" d="M1 9h10" /><text x="13" y="16" fontSize="8" fontWeight="bold" fill="#1010e0" stroke="none">F</text></Icon>],
  ['Rectángulo azul', <Icon><path stroke="#6090f0" fill="#a8c4e8" d="M4 6h12v7H4z" /><Handles at={[[4, 13], [16, 5]]} /></Icon>],
  ['Rectángulo rojo', <Icon><path stroke="#e02020" fill="#c0a8b0" strokeWidth="1.500" d="M4 6h12v7H4z" /><Handles at={[[4, 13], [16, 5]]} /></Icon>],
  ['Flecha', <Icon><path strokeWidth="2" d="M4 14l9-7" /><path fill="#111" d="M17 4l-7 1l4 5z" /><circle cx="4" cy="14" r="1.500" fill="#111" /></Icon>],
  ['Texto', <Icon><rect x="3" y="2" width="14" height="13" rx="3" stroke="#6090e8" strokeWidth="1.500" /><text x="10" y="12" textAnchor="middle" stroke="none" fill="#000" fontSize="9" fontWeight="bold">T</text></Icon>],
  ['Comentario', <Icon><ellipse cx="10" cy="8" rx="8" ry="6.500" stroke="#6090e8" strokeWidth="1.500" /><path stroke="#6090e8" d="M6 14l-2 3l6-3" /><text x="10" y="11" textAnchor="middle" stroke="none" fill="#087008" fontSize="9" fontWeight="bold">T</text></Icon>],
  ['Segmento', <Icon><path d="M5 13l10-8" strokeWidth="1.500" /><circle cx="5" cy="13" r="2" fill="#9cb9c8" /><circle cx="15" cy="5" r="2" fill="#9cb9c8" /></Icon>],
  ['Rayo verde', <Icon><path stroke="#30c030" strokeWidth="1.500" d="M7 9h11" /><circle cx="5" cy="9" r="1.800" stroke="#30a030" /></Icon>],
  ['Rayo rojo', <Icon><path stroke="#f01010" strokeWidth="1.500" d="M7 9h11" /><circle cx="5" cy="9" r="1.800" stroke="#c01010" /></Icon>],
  ['Regla', <Icon><path fill="#9aa8b0" stroke="#445" d="M2 12L13 4l5 2L7 14.500zM6 10l2 1M8.500 8l2 1M11 6l2 1" /></Icon>],
  ['Fibonacci', <Icon><path stroke="#50c070" strokeDasharray="2 1" d="M2 3h16M2 7h16M2 15h16" /><path stroke="#c090d0" d="M2 13l4-4l4 4l4-5l4 3" /></Icon>],
  ['Elipse roja', <EllipseIcon color="#e02030" />],
  ['Elipse marrón', <EllipseIcon color="#906020" />],
  ['Elipse verde', <EllipseIcon color="#108020" />],
  ['Elipse lima', <EllipseIcon color="#20d030" />],
  ['Línea negra', <LineIcon d="M1 17L18 1" color="#111" />],
  ['Línea verde', <LineIcon d="M1 17L18 1" color="#20b020" />],
  ['Línea roja', <LineIcon d="M1 17L18 1" color="#f01010" width={2} />],
  ['Horizontal negra', <LineIcon d="M1 9.500H19" color="#111" />],
  ['Horizontal salmón', <LineIcon d="M1 9.500H19" color="#ff8a70" />],
  ['Horizontal lima', <LineIcon d="M1 9.500H19" color="#00f000" />],
  ['Horizontal verde', <LineIcon d="M1 9.500H19" color="#008010" />],
  ['Horizontal roja', <LineIcon d="M1 9.500H19" color="#f01010" />],
  ['Horizontal celeste', <LineIcon d="M1 9.500H19" color="#60a0ff" />],
  ['Horizontal marina', <LineIcon d="M1 9.500H19" color="#0000a0" />],
  ['Vertical', <LineIcon d="M10.500 0V18" color="#111" />],
  ['Ángulo', <Icon><path stroke="#e03030" d="M17 15H3L16 4" /><path stroke="#e03030" d="M11 8q3 3 2 7" /><text x="15" y="9" fontSize="7" fontWeight="bold" fill="#1010e0" stroke="none">a</text></Icon>],
  ['Ciclo', <Icon><ellipse cx="10" cy="9" rx="7" ry="6" stroke="#f07020" /><Handles at={[[8, 9], [13, 9]]} /></Icon>],
  ['Ondas 12345', <Icon><text x="1" y="8" fontSize="7" fontWeight="bold" fill="#1010e0" stroke="none">1 2 4</text><path stroke="#1010e0" strokeDasharray="2 1" d="M2 14l4-5l4 5l4-6l4 6" /></Icon>],
  ['Ondas abc', <Icon><text x="2" y="8" fontSize="7" fontWeight="bold" fill="#1010e0" stroke="none">a b</text><path stroke="#1010e0" strokeDasharray="2 1" d="M2 14l6-6l4 5l6-8" /><text x="13" y="16" fontSize="7" fontWeight="bold" fill="#1010e0" stroke="none">c</text></Icon>],
  ['Aceptar', <Icon><path fill="#20c820" stroke="#108010" d="M2 10l3-2l3 3l8-8l2 2L8 16z" /></Icon>],
  ['Me gusta', <Icon><path fill="#20c820" stroke="#108010" d="M3 9h3l4-6c2 0 2 2 1 5h5q2 0 1 2l-1 5q-.5 1-2 1H7l-1-1H3z" /></Icon>],
  ['Borrar', <Icon><path stroke="#f01818" strokeWidth="4.500" d="M5 4l10 10M15 4L5 14" /></Icon>],
  ['Aviso', <Icon><path fill="#ffa020" stroke="#c06000" strokeLinejoin="round" d="M10 2l7.500 13h-15z" /><path stroke="#fff" strokeWidth="1.500" d="M10 6v5M10 12.500v1.500" /></Icon>],
  ['Arriba', <Icon><path fill="#18b018" stroke="#087008" d="M10 2l6 6h-3v8H7V8H4z" /></Icon>],
  ['Abajo', <Icon><path fill="#f01818" stroke="#a00808" d="M7 2h6v7h3l-6 6l-6-6h3z" /></Icon>],
];

const PencilChart = () => (
  <Icon><path stroke="#e02020" d="M1 14l4-9l3 9l4-4" /><path stroke="#18a018" d="M1 10l6 6l6-8" /><path fill="#f8d020" stroke="#704000" d="M9 13l7-11l2 1.500l-7 11l-2.500 1.500z" /></Icon>
);

const footTools = [
  ['Compartir', <Icon><path stroke="#f4f8fa" strokeWidth="1.500" d="M13 4L5 9l8 5" /><circle cx="13" cy="4" r="2.500" fill="#fff" stroke="#dde" /><circle cx="5" cy="9" r="2.500" fill="#fff" stroke="#dde" /><path fill="#111" d="M12 14l3 3l3-3z" /></Icon>],
  ['Chat', <Icon><rect x="2" y="1" width="9" height="11" fill="#eef4f8" stroke="#89a" /><path fill="#3878e0" stroke="#2050b0" d="M6 6h11v8h-6l-3 3v-3H6z" /><path stroke="#fff" strokeDasharray="1 2" d="M8 10h8" /></Icon>],
  ['Informe', <Icon><rect x="5" y="1.500" width="10" height="14" fill="#f4f4f4" stroke="#556" /><path stroke="#666" d="M7 4h3M7 6h3M7 8h5" /><path stroke="#d02020" strokeWidth="2" d="M10 4l2 2l2-3" /><path stroke="#208020" strokeWidth="2" d="M7 13l2-3l4 3" /></Icon>],
  ['Órdenes', <Icon><path fill="#20c020" stroke="#107010" d="M3 2h7v3H3zM2 7h8v3H2zM3 12h7v3H3z" /><path fill="#f03030" stroke="#a01010" d="M11 4h6v2h-6zM11 10h6v2h-6zM11 1h1v15h-1z" /></Icon>],
  ['Ventanas', <Icon><rect x="2" y="1" width="10" height="9" fill="#fff" stroke="#2060c0" strokeWidth="1.500" /><rect x="7" y="6" width="11" height="10" fill="#fff" stroke="#2060c0" strokeWidth="1.500" /><path stroke="#20a020" d="M8 13l3-4l3 5l3-4" /></Icon>],
];

const footRight = [
  ['Deshacer', <Icon><path stroke="#6c9cc4" strokeWidth="2" d="M5 6h5q5 1 3 9M8 2L4 6l4 4" /></Icon>],
  ['Rehacer', <Icon><path stroke="#6c9cc4" strokeWidth="2" d="M15 6h-5q-5 1-3 9M12 2l4 4l-4 4" /></Icon>],
  ['Ajustes', <Icon><path fill="#30c050" stroke="#107020" d="M10 2h6v12h-6z" /><path stroke="#f03030" d="M3 7v10" /><path stroke="#444" strokeWidth="3" d="M4 14l7-7M10 4l2 3l3 0" /><path stroke="#eee" d="M4 14l7-7" /></Icon>],
  ['Ajustar zoom', <Lens arrows />],
  ['Alejar', <Lens sign="-" />],
  ['Acercar', <Lens sign="+" />],
];

/* ---------- page ---------- */

const PanelTitle = ({ colors, children }) => (
  <Tabs>
    <Tab>
      <span>
        {colors.map((color) => <svg key={color} width={8 / colors.length} height="8" aria-hidden="true"><rect width="8" height="8" fill={color} /></svg>)}
      </span>
      {children}
    </Tab>
  </Tabs>
);

const TopToolbar = () => (
  <TopBar>
    <Group $w={23}>
      <Icon w={14} h={16}><path stroke="#087008" fill="#20b020" d="M2 7h2v5H2zM6 5h2v7H6zM10.500 3h2v7h-2zM3 5v9M7 3v12M11.500 1v12" /></Icon>
    </Group>
    <Group $w={16}><Icon w={8} h={16}><path stroke="#71858f" strokeWidth="1.500" d="M2 6V2h4v4M2 10v4h4v-4M4 5v6" /></Icon></Group>
    <Group $w={61} $pad={5}><Picker>EURUSD <Caret /></Picker></Group>
    <Group $w={195} $pad={3}>
      {['144s', '12m', '56m', '1h', '4h', 'D', 'W', 'M', 'Q'].map((scale) => (
        <ScaleButton key={scale} $on={scale === 'Q'}>{scale}</ScaleButton>
      ))}
    </Group>
    <Group $w={67} $pad={4}><Picker>1 trimestre <Caret /></Picker></Group>
    <Group $w={92} $pad={4}>
      {['5kU', '10kU', '35kU'].map((unit) => <ScaleButton key={unit} $on={unit === '10kU'}>{unit}</ScaleButton>)}
    </Group>
    <Group $w={86} $pad={5}><Picker>10 k unidades <Caret /></Picker></Group>
    <Group $w={84} $pad={4}>
      <BarButton>
        <Icon w={17} h={16}>
          <path stroke="#18b018" strokeWidth="1.500" d="M1 6q4-7 7 0t8 0" />
          <path stroke="#e03030" strokeWidth="1.500" d="M1 3q4 0 7 4t8-6" />
          <path fill="#e01010" stroke="none" d="M1 11h4v4H1zM9 12h4v3H9z" />
          <path fill="#00a010" stroke="none" d="M5 12h4v3H5zM13 11h4v4h-4z" />
        </Icon>
        Indicadores
      </BarButton>
    </Group>
    <Group $w={14} $pad={3}><BarButton aria-label="Más indicadores"><Caret /></BarButton></Group>
    <Group $open $gap={3} $pad={7}>
      <Icon w={10} h={12}><rect x=".5" y="1.500" width="9" height="9" fill="#f0f0f0" stroke="#a8a8a8" /><path stroke="#888" strokeWidth="1.500" d="M5 3v1.500M5 5.500v4" /></Icon>
      <Icon w={14} h={10}><circle cx="7" cy="5" r="3" fill="#888" stroke="#aaa" /></Icon>
      <Change>+0,19 %</Change>
      <span>3 oct 2025</span>
      <Pair>EUR/USD</Pair>
    </Group>
    <Spacer />
    <Group $w={21} $pad={2}>
      <BarButton aria-label="Actualizar">
        <Icon w={16} h={16}>
          <path stroke="#f04040" strokeWidth="3" d="M9 2q-5 0-5 6" /><path fill="#f04040" stroke="none" d="M0 7h8l-4 5z" />
          <path stroke="#18b018" strokeWidth="3" d="M7 14q5 0 5-6" /><path fill="#18b018" stroke="none" d="M8 9h8l-4-5z" />
        </Icon>
      </BarButton>
    </Group>
    <Group $open $gap={5} $pad={4}>
      <BarButton aria-label="Minimizar"><Icon w={9} h={10}><path stroke="#71858f" strokeWidth="2" d="M1 9h8" /></Icon></BarButton>
      <BarButton aria-label="Restaurar"><Icon w={9} h={10}><path stroke="#71858f" d="M3 3V1h5.500v5H6.500M.5 3.500h6v5h-6z" /></Icon></BarButton>
      <BarButton aria-label="Cerrar"><Icon w={9} h={10}><path stroke="#71858f" strokeWidth="2" d="M1 1l7 7M8 1L1 8" /></Icon></BarButton>
    </Group>
  </TopBar>
);

const App = () => (
  <Shell>
    <GlobalStyle />
    <TopToolbar />
    <Body>
      <Rail>
        <RailButton $h={12} aria-label="Subir"><Caret up /></RailButton>
        <RailTools>
          {tools.map(([label, icon], i) => <RailButton key={label} aria-label={label} $on={i === 0}>{icon}</RailButton>)}
        </RailTools>
        <RailButton $h={14} aria-label="Bajar"><Caret /></RailButton>
        <RailButton $h={26} aria-label="Objetos">
          <Icon w={22} h={22}>
            <path fill="#eef4f8" stroke="#556" d="M7 7h11v9H7z" /><circle cx="6" cy="5" r="4.500" fill="#109010" stroke="none" />
            <text x="6" y="8" textAnchor="middle" fontSize="8" fontWeight="bold" fill="#fff" stroke="none">1</text>
            <path fill="#fff" d="M12 11l6 4l-2 4l-5-3zM10 18l4 3" />
          </Icon>
        </RailButton>
        <RailButton $h={27} aria-label="Más"><Icon h={10}><path strokeWidth="3" strokeDasharray="3 2" d="M3 4h9" /><path fill="#111" d="M13 4h5l-2.500 3z" /></Icon></RailButton>
      </Rail>
      <Charts>
        <Panel>
          <PricePlot />
          <Axis>
            <AxisLabels
              top={23}
              labels={[
                ['1,7', 27], ['1,6', 81], ['1,5', 141], ['1,4', 201], ['1,3', 261], ['1,2', 321], ['1,1', 381], ['1', 440],
                ['0,9', 500], ['0,8', 560], ['0,7', 620], ['0,6', 680],
                ['1,12854', 358, '#108010', true], ['1,12660', 366, '#906000', true], ['1,11719', 375, '#a00000', true],
              ]}
            />
          </Axis>
          <Title>Q<br />EUR/USD</Title>
          <Tabs>
            <Tab>
              <Icon w={10} h={10}><path fill="#fff" stroke="#99a" d="M.5.5h9v9h-9z" /><path fill="#e02020" stroke="none" d="M4 2h2v2h2.500L5 8L1.500 4H4z" /></Icon>
              <Icon w={10} h={10}><path fill="#fff" stroke="#99a" d="M.5.5h9v9h-9z" /><path fill="#18b018" stroke="none" d="M4 8h2V6h2.500L5 2L1.500 6H4z" /></Icon>
            </Tab>
            <Tab as="label"><Check type="checkbox" /> Precio</Tab>
            <Tab><Icon w={11} h={9}><path stroke="#222" d="M3 1.500h7M3 4.500h7M3 7.500h7M0 1.500h2M0 4.500h2M0 7.500h2" /></Icon></Tab>
            <Tab as="label"><Check type="checkbox" /> Cierre (W)</Tab>
            <Tab><Swatch $fill="#75909a" /> Tunel Domenec v4 (t t t t t)</Tab>
            <Tab><Swatch $fill="linear-gradient(90deg, #000 25%, #00c000 25% 50%, #f0a0a0 50% 70%, #e00000 70%)" /> Control Total Doc v.6</Tab>
            <Tab><Swatch $fill="#000" /> Multi Avisos (3 f 3 1,5 70 f f)</Tab>
          </Tabs>
          <Source>IT-Finance.com - Tiempo Real</Source>
        </Panel>
        <Panel $h={105}>
          <TrainsPlot />
          <Axis>
            <AxisLabels
              top={687}
              labels={[
                ['60', 731], ['100', 694, '#000', true], ['87,724', 706, '#000', true], ['80', 717, '#000', true],
                ['50', 742, '#0000a0', true], ['24,672', 764, '#000', true], ['34,113', 755, '#0000a0', true],
                ['20', 771, '#000', true], ['0', 784, '#000', true],
              ]}
            />
          </Axis>
          <PanelTitle colors={['#75909a', '#000']}>Sistema de trenes Doc v4 (f f)</PanelTitle>
        </Panel>
        <Panel $h={72}>
          <WillyPlot />
          <Axis>
            <AxisLabels
              top={792}
              labels={[
                ['0', 798, '#000', true], ['-26,955', 815, '#0000a0', true], ['-50', 829, '#0000a0', true],
                ['-75', 844, '#c00000', true], ['-100', 857, '#000', true],
              ]}
            />
          </Axis>
          <PanelTitle colors={['#75909a']}>Willy Doc (t)</PanelTitle>
        </Panel>
        <Panel $h={69}>
          <AwesomePlot />
          <Axis>
            <AxisLabels
              top={864}
              labels={[
                ['0,2', 881], ['-0,2', 926], ['0,0788', 888, '#000', true], ['0,0788', 895, '#0000d0', true],
                ['-0,0049', 904, '#20a020', true], ['-0,0049', 910, '#40d840', true],
              ]}
            />
          </Axis>
          <PanelTitle colors={['#75909a']}>Awesome Evolution Doc</PanelTitle>
        </Panel>
        <Panel $h={63}>
          <ForcePlot />
          <Axis>
            <AxisLabels top={933} labels={[['0,505', 938], ['0,495', 991], ['0,5000', 965, '#000', true]]} />
          </Axis>
          <PanelTitle colors={['#000', '#75909a']}>Barra Fuerza Fondo Mercado v4 (f)</PanelTitle>
        </Panel>
        <TimeAxis aria-label="Años">
          <path stroke="#75909a" strokeWidth="1" d="M0 .5H1850" />
          {years.map((year, i) => (
            <g key={year}>
              <line x1={x(i * 4) - LEFT} x2={x(i * 4) - LEFT} y1="0" y2="3" stroke="#75909a" />
              <Caption x={x(i * 4) - LEFT} y="12">{year}</Caption>
            </g>
          ))}
        </TimeAxis>
      </Charts>
    </Body>
    <BottomBar>
      <FootButton aria-label="Dibujar"><PencilChart /></FootButton>
      {footTools.map(([label, icon]) => <FootButton key={label} aria-label={label}>{icon}</FootButton>)}
      <BarButton aria-label="Plegar"><Icon w={8} h={10}><path stroke="#444" d="M4 1L1 5l3 4M7.500 1L4.500 5l3 4" /></Icon></BarButton>
      <ScrollTrack>
        <ScrollStep aria-label="Atrás">‹</ScrollStep>
        <ScrollThumb />
        <ScrollFree />
        <ScrollStep aria-label="Adelante">›</ScrollStep>
      </ScrollTrack>
      {footRight.map(([label, icon]) => <FootButton key={label} aria-label={label}>{icon}</FootButton>)}
      <CutButton aria-label="Teclado">
        <Icon w={14}><path stroke="#222" strokeWidth="3" strokeDasharray="2 1" d="M1 5h13" /><path stroke="#1060d0" strokeWidth="1.500" d="M9 9v7M6 13l3 3l3-3" /></Icon>
      </CutButton>
    </BottomBar>
  </Shell>
);

export default App;
